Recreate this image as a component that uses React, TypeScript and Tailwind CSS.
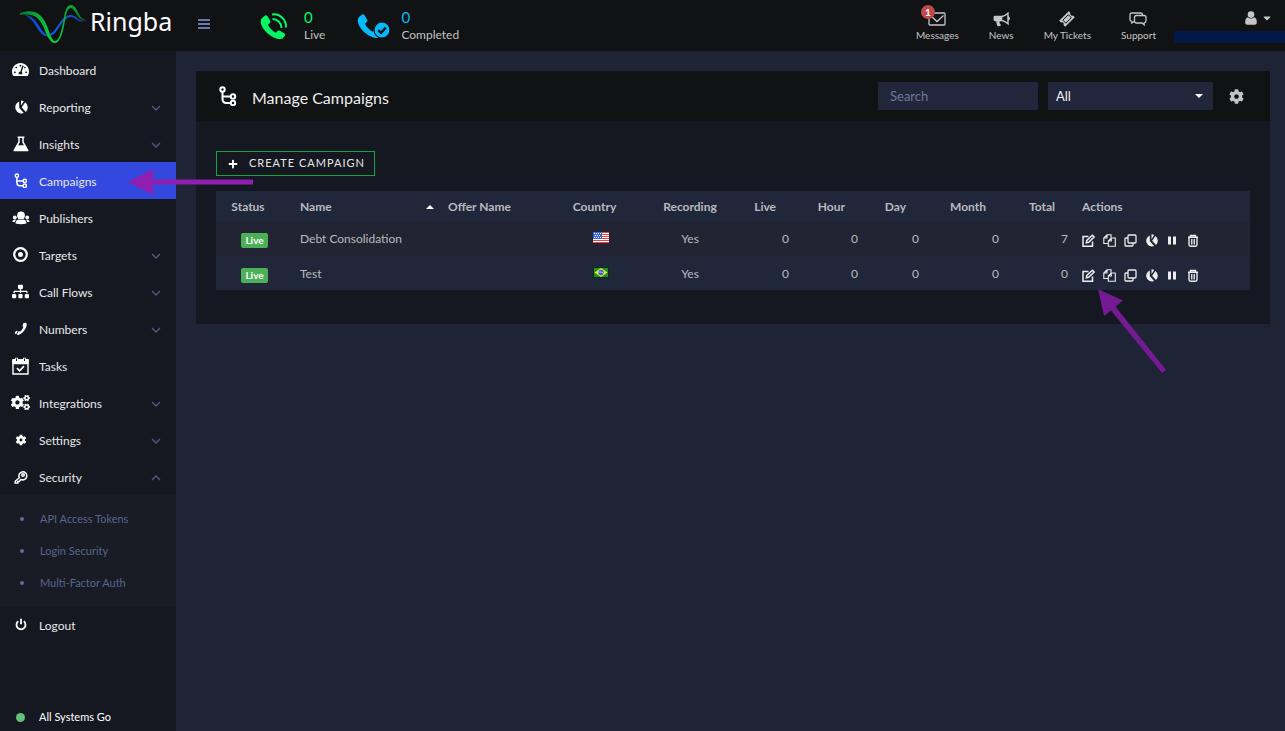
import React from "react";
import clsx from "clsx";
import { FaCaretDown, FaCog, FaCogs, FaPlus, FaSitemap, FaTachometerAlt } from "react-icons/fa";

type IconProps = { className?: string };

const TreeIcon: React.FC<IconProps> = ({ className }) => (
  <svg viewBox="0 0 18 20" className={className} fill="none" stroke="currentColor" strokeWidth="2">
    <circle cx="3.5" cy="3.5" r="2.2" />
    <circle cx="14" cy="10.5" r="2.2" />
    <circle cx="14" cy="17" r="2.2" />
    <path d="M3.5 5.7V13q0 4 4 4h4.3M3.5 10.5h8.3" />
  </svg>
);

const PieIcon: React.FC<IconProps> = ({ className }) => (
  <svg viewBox="0 0 14 14" className={className} fill="currentColor">
    <path d="M5.200 1.500v6.200l4.600 5.300A5.900 5.900 0 1 1 5.200 1.500z" />
    <path d="M7 .4A6 6 0 0 1 9.800 1.200L7 5.600z" />
    <path d="M11.200 2.200a6.300 6.300 0 0 1 .6 9.700L7.700 7.300z" />
  </svg>
);

const FlaskIcon: React.FC<IconProps> = ({ className }) => (
  <svg viewBox="0 0 16 16" className={className} fill="none" stroke="currentColor" strokeWidth="1.5">
    <path d="M4.600 1.200h6.800M6 1.500v4.700L1.500 14h13L10 6.200V1.500" />
    <path d="M4.300 10h7.400l2.400 4.500H1.900z" fill="currentColor" />
  </svg>
);

const UsersIcon: React.FC<IconProps> = ({ className }) => (
  <svg viewBox="0 0 18 14" className={className} fill="currentColor">
    <circle cx="9" cy="4.500" r="3.900" />
    <circle cx="2.800" cy="6.500" r="1.900" />
    <circle cx="15.200" cy="6.500" r="1.900" />
    <path d="M3.500 12.500q0-3.700 3.500-4 2 1.100 4 0 3.500.3 3.500 4-5.500 1.600-11 0zM.4 11q0-2 1.800-2.200h2Q3 9.800 2.800 11zM17.600 11q0-2-1.800-2.200h-2q1.200 1 1.400 2.200z" />
  </svg>
);

const TargetIcon: React.FC<IconProps> = ({ className }) => (
  <svg viewBox="0 0 16 16" className={className}>
    <circle cx="7.500" cy="7.500" r="6.300" fill="none" stroke="currentColor" strokeWidth="2.200" />
    <circle cx="7.500" cy="7.500" r="2.500" fill="currentColor" />
  </svg>
);

const HandsetIcon: React.FC<IconProps> = ({ className }) => (
  <svg viewBox="0 0 14 14" className={className} fill="currentColor">
    <path d="M9.300 1.300 11 .7q1-.3 1.600.8c1 3.200-3.600 10.400-8.300 11.500q-1 .1-1.500-.7l1.900-3.100 1.400.4c1.500-1 2.800-2.700 3.300-4.500l-.9-1z" />
    <path d="M.8 10.300 2.500 8.700l1.300.3-1.700 3.200-1-.4z" />
  </svg>
);

const CalendarIcon: React.FC<IconProps> = ({ className }) => (
  <svg viewBox="0 0 17 18" className={className} fill="none" stroke="currentColor" strokeWidth="1.400">
    <path d="M1 3h15v14H1z" />
    <path d="M1 3h15v3.500H1z" fill="currentColor" />
    <path d="M4.500.7v3M12.500.7v3" strokeWidth="2.800" />
    <path d="M4.500 1.500v2.500M12.500 1.500v2.500" stroke="#151821" strokeWidth="1" />
    <path d="m5 11.200 2.600 2.600 4.400-4.600" strokeWidth="1.700" />
  </svg>
);

const KeyIcon: React.FC<IconProps> = ({ className }) => (
  <svg viewBox="0 0 14 14" className={className} fill="none" stroke="currentColor" strokeWidth="1.500">
    <path d="M5.300 7.700 1.200 11.300v1.600h2.600v-1.500h1.400L7 9.400a4 4 0 1 0-1.700-1.700z" />
    <circle cx="9" cy="5" r="1.300" />
  </svg>
);

const PowerIcon: React.FC<IconProps> = ({ className }) => (
  <svg viewBox="0 0 12 13" className={className} fill="none" stroke="currentColor" strokeWidth="1.800">
    <path d="M3.200 3.300a4.500 4.500 0 1 0 5.600 0M6 .8v5.400" />
  </svg>
);

const SmallGearIcon: React.FC<IconProps> = ({ className }) => (
  <svg viewBox="0 0 14 14" className={className}>
    <path d="M7 .8v12.400M1.600 3.900l10.800 6.200M1.600 10.100l10.800-6.200" stroke="currentColor" strokeWidth="3" />
    <circle cx="7" cy="7" r="3.300" fill="none" stroke="currentColor" strokeWidth="3" />
    <circle cx="7" cy="7" r="1.700" fill="#151821" />
  </svg>
);

const Chevron: React.FC<{ up?: boolean }> = ({ up }) => (
  <svg
    viewBox="0 0 10 6"
    className="mt-[2px] h-[6px] w-[10px] text-[#515c85]"
    fill="none"
    stroke="currentColor"
    strokeWidth="1.300"
  >
    <path d={up ? "M1 5l4-4 4 4" : "M1 1l4 4 4-4"} />
  </svg>
);

const Logo = () => (
  <a href="#home" className="flex items-start" aria-label="Ringba">
    <svg viewBox="0 0 67 39" className="h-[39px] w-[67px] shrink-0" fill="none">
      <defs>
        <linearGradient id="green" x1="0" x2="1">
          <stop offset="0" stopColor="#0a7a24" />
          <stop offset=".5" stopColor="#07d345" />
          <stop offset="1" stopColor="#087d25" />
        </linearGradient>
        <linearGradient id="blue" x1="0" x2="1">
          <stop offset="0" stopColor="#0a3fc4" />
          <stop offset=".5" stopColor="#1160e8" />
          <stop offset="1" stopColor="#103e98" />
        </linearGradient>
      </defs>
      <path
        fill="url(#blue)"
        d="M6 10C15 11 19 22 24 28c3 3 6 2 10-2 6-8 9-16 17-16 6 0 8 8 15 5-7 5-10-3-15-3-7 0-10 9-16 16-6 5-11 4-15-1C15 21 12 12 4 10z"
      />
      <path
        fill="url(#green)"
        d="M0 8c15-5 22 1 27 13 3 8 5 15 8 15 4 0 6-9 8-18C45 7 46 0 51 0c7 0 7 15 15 15-8 2-11-12-15-12-5 0-5 9-7 18-2 10-5 17-9 17-5 0-8-7-11-15C19 12 14 8 0 10z"
      />
    </svg>
    <span className="ml-[3px] font-['Noto_Sans',sans-serif] text-[25px] leading-8 text-white">Ringba</span>
  </a>
);

const phonePath =
  "M2.500 4.500 6 1.500q1.400-.8 2.400.6l2.800 4.700q.7 1.300-.4 2.300L9 10.700c1.600 3.300 4.400 6.200 7.700 8l1.800-1.700q1.100-1 2.400-.3l4.600 2.700q1.300 1 .4 2.400l-2.400 2.800C16 27.500-2 14 2.500 4.500z";

const CallLiveIcon = () => (
  <svg viewBox="0 0 28 28" className="size-7 text-[#04f765]" fill="none" stroke="currentColor" strokeWidth="2">
    <path d={phonePath} fill="currentColor" stroke="none" transform="translate(-1 2)" />
    <path d="M12 2.500c7.500-1.500 14.500 5 14 13M12.500 7c5 0 8.800 3.600 9 9" />
  </svg>
);

const CallDoneIcon = () => (
  <svg viewBox="0 0 33 28" className="h-7 w-[33px] text-[#05b9fb]">
    <path d={phonePath} fill="currentColor" transform="translate(-1 1)" />
    <circle cx="25" cy="18" r="8" fill="currentColor" stroke="#111214" strokeWidth="1.200" />
    <path d="m21.300 18.200 2.700 2.600 4.800-5.200" fill="none" stroke="#111214" strokeWidth="2.400" />
  </svg>
);

const MailIcon: React.FC<IconProps> = ({ className }) => (
  <svg viewBox="0 0 18 14" className={className} fill="none" stroke="currentColor" strokeWidth="1.300">
    <rect x="1" y="1" width="16" height="12" rx="1" />
    <path d="m2.500 3.500 6.500 6 6.500-6" />
  </svg>
);

const HornIcon: React.FC<IconProps> = ({ className }) => (
  <svg viewBox="0 0 17 15" className={className} fill="none" stroke="currentColor" strokeWidth="1.400">
    <path d="M9 4.500Q12 4 15 1.200v10.600Q12 9 9 8.500" />
    <path d="M15.500 5.300q1.600 1.200 0 2.400z" fill="currentColor" />
    <path
      d="M2 3.800h7.300v5.400H6.800q-.8 1 0 2l1.300 2q-1.700 1.500-3.700.7-1-2.300-1.200-4.700H2Q.6 9.200.6 7.800V5.200Q.6 3.800 2 3.800z"
      fill="currentColor"
      stroke="none"
    />
  </svg>
);

const TicketIcon: React.FC<IconProps> = ({ className }) => (
  <svg viewBox="0 0 16 16" className={className}>
    <path
      d="M9.700.2 11.400 1.800a1.900 1.900 0 0 0 2.600 2.600l1.800 1.800-9.600 9.600-1.700-1.700a1.900 1.900 0 0 0-2.600-2.600L.2 9.700z"
      fill="currentColor"
    />
    <path d="m9.300 3.700 3 3-5.500 5.500-3-3z" fill="none" stroke="#111214" strokeWidth="1" />
  </svg>
);

const ChatIcon: React.FC<IconProps> = ({ className }) => (
  <svg viewBox="0 0 18 14" className={className} fill="none" stroke="currentColor" strokeWidth="1.300">
    <path d="M5 9.500 2.800 11V9.300Q1 9 1 7.500V3q0-2 2-2h8.500q2 0 2 2" />
    <path d="M7.500 3.500H15q2 0 2 2v3.300q0 1.800-1.800 2v2L13 11H7.500q-2 0-2-2V5.500q0-2 2-2z" />
  </svg>
);

const UserIcon: React.FC<IconProps> = ({ className }) => (
  <svg viewBox="0 0 12 14" className={className} fill="currentColor">
    <circle cx="6" cy="3.600" r="3.300" />
    <path d="M2.800 6.200Q6 9 9.200 6.200 12 7 11.800 12q-.2 1.700-2 1.700H2.200Q.4 13.700.2 12 0 7 2.800 6.200z" />
  </svg>
);

const EditIcon: React.FC<IconProps> = ({ className }) => (
  <svg viewBox="0 0 13 13" className={className} fill="none" stroke="currentColor" strokeWidth="1.500">
    <path d="M6.500 2.500H1v9.700h9.500V7.500" />
    <path d="m4.300 8.800.5-2.300 5.500-5.300 1.800 1.800-5.500 5.300z" />
  </svg>
);

const FilesIcon: React.FC<IconProps> = ({ className }) => (
  <svg viewBox="0 0 13 13" className={className} fill="none" stroke="currentColor" strokeWidth="1.100">
    <path d="M5 9.500H.8V4L4 .8h4v3M4 .8V4H.8" />
    <path d="M5.300 12.300V7l3-3h4v8.300zM8.300 4v3h-3" />
  </svg>
);

const CloneIcon: React.FC<IconProps> = ({ className }) => (
  <svg viewBox="0 0 13 13" className={className} fill="none" stroke="currentColor" strokeWidth="1.300">
    <rect x="4" y="1" width="8" height="8" rx="1" />
    <path d="M4 4H1.800q-.8 0-.8.8V11q0 1 .8 1H8q1 0 1-1V9" />
  </svg>
);

const PauseIcon: React.FC<IconProps> = ({ className }) => (
  <svg viewBox="0 0 13 13" className={className} fill="currentColor">
    <path d="M2 2.500h3v8H2zM7 2.500h3v8H7z" />
  </svg>
);

const TrashIcon: React.FC<IconProps> = ({ className }) => (
  <svg viewBox="0 0 13 13" className={className} fill="none" stroke="currentColor" strokeWidth="1.400">
    <path d="M1 3.200h10M3.500 3V1.500h5V3M2 3.500v7q0 1.700 1.500 1.700h5q1.500 0 1.500-1.700v-7" />
    <path d="M4.500 5v5.500M6 5v5.500M7.500 5v5.500" strokeWidth=".9" />
  </svg>
);

const FlagUS = () => (
  <svg viewBox="0 0 16 11" className="mx-auto mb-[3px] h-[11px] w-4" role="img" aria-label="United States">
    <path fill="#fff" d="M0 0h16v11H0z" />
    <path fill="#e0443c" d="M0 0h16v1H0zM0 2h16v1H0zM0 4h16v1H0zM0 6h16v1H0zM0 8h16v1H0zM0 10h16v1H0z" />
    <path fill="#3a66d8" d="M0 0h9v7H0z" />
    <path stroke="#fff" strokeDasharray="1 1" d="M1 1.500h7M2 3.500h6M1 5.500h7" />
  </svg>
);

const FlagBR = () => (
  <svg viewBox="0 0 16 11" className="mx-auto mb-[3px] h-[11px] w-4" role="img" aria-label="Brazil">
    <path fill="#07330c" d="M0 0h16v11H0z" />
    <path fill="#1f8f2d" d="M1 1h14v9H1z" />
    <path fill="#f5e52a" d="m8 1 6.500 4.500L8 10 1.500 5.500z" />
    <circle cx="8" cy="5.500" r="2.700" fill="#2f5fd0" />
    <path d="M5.500 5q3-.6 5 1.300" stroke="#dfe8fb" strokeWidth=".8" fill="none" />
  </svg>
);

type NavItem = {
  label: string;
  icon: React.FC<IconProps>;
  iconClass: string;
  arrow?: "down" | "up";
  active?: boolean;
};

const NAV: NavItem[] = [
  { label: "Dashboard", icon: FaTachometerAlt, iconClass: "size-[17px]" },
  { label: "Reporting", icon: PieIcon, iconClass: "size-[14px]", arrow: "down" },
  { label: "Insights", icon: FlaskIcon, iconClass: "size-4", arrow: "down" },
  { label: "Campaigns", icon: TreeIcon, iconClass: "h-[15px] w-[14px]", active: true },
  { label: "Publishers", icon: UsersIcon, iconClass: "h-[14px] w-[18px]" },
  { label: "Targets", icon: TargetIcon, iconClass: "size-4", arrow: "down" },
  { label: "Call Flows", icon: FaSitemap, iconClass: "size-[17px]", arrow: "down" },
  { label: "Numbers", icon: HandsetIcon, iconClass: "size-[14px]", arrow: "down" },
  { label: "Tasks", icon: CalendarIcon, iconClass: "h-[18px] w-[17px]" },
  { label: "Integrations", icon: FaCogs, iconClass: "size-[19px]", arrow: "down" },
  { label: "Settings", icon: SmallGearIcon, iconClass: "size-[12px]", arrow: "down" },
  { label: "Security", icon: KeyIcon, iconClass: "size-[14px]", arrow: "up" },
];

const SECURITY_LINKS = ["API Access Tokens", "Login Security", "Multi-Factor Auth"];

const TOP_LINKS = [
  { label: "Messages", icon: MailIcon, iconClass: "h-[14px] w-[18px]", badge: 1 },
  { label: "News", icon: HornIcon, iconClass: "h-[15px] w-[17px]" },
  { label: "My Tickets", icon: TicketIcon, iconClass: "size-4" },
  { label: "Support", icon: ChatIcon, iconClass: "h-[14px] w-[18px]" },
];

const ROWS = [
  { name: "Debt Consolidation", flag: FlagUS, total: 7 },
  { name: "Test", flag: FlagBR, total: 0 },
];

const ACTIONS = [
  { label: "Edit", icon: EditIcon },
  { label: "Copy", icon: FilesIcon },
  { label: "Clone", icon: CloneIcon },
  { label: "Report", icon: PieIcon },
  { label: "Pause", icon: PauseIcon },
  { label: "Delete", icon: TrashIcon },
];

const Stat: React.FC<{ label: string; value: number; className: string; children: React.ReactNode }> = ({
  label,
  value,
  className,
  children,
}) => (
  <div className={clsx("flex items-center", className)}>
    {children}
    <div className="flex flex-col">
      <span className="text-[15px] leading-[18px]">{value}</span>
      <span className="text-xs leading-[18px] text-[#c2c2c2]">{label}</span>
    </div>
  </div>
);

const TopBar = () => (
  <header className="flex h-[51px] items-center bg-[#111214]">
    <div className="flex w-[176px] shrink-0 items-center pb-[2px] pl-5">
      <Logo />
    </div>
    <button type="button" aria-label="Toggle menu" className="ml-[22px] flex w-3 flex-col gap-[2px] pb-[3px]">
      <span className="h-[2px] w-3 bg-[#6878a8]" />
      <span className="h-[2px] w-3 bg-[#6878a8]" />
      <span className="h-[2px] w-3 bg-[#6878a8]" />
    </button>
    <div className="ml-[50px] flex gap-8">
      <Stat label="Live" value={0} className="gap-4 text-[#04f765]">
        <CallLiveIcon />
      </Stat>
      <Stat label="Completed" value={0} className="gap-[11px] text-[#05b9fb]">
        <CallDoneIcon />
      </Stat>
    </div>
    <nav className="ml-auto flex h-full gap-[30px] text-[#c6c6c6]">
      {TOP_LINKS.map(({ label, icon: Icon, iconClass, badge }) => (
        <a key={label} href="#top" className="relative flex flex-col items-center pt-[11px] text-[10px]">
          <span className="flex h-4 items-center">
            <Icon className={iconClass} />
          </span>
          <span className="leading-4">{label}</span>
          {badge && (
            <span className="absolute top-[5px] left-[5px] flex size-[14px] items-center justify-center rounded-full bg-[#c04a4a] font-bold text-white">
              {badge}
            </span>
          )}
        </a>
      ))}
    </nav>
    <div className="ml-[18px] flex h-full w-[111px] flex-col items-end pt-[11px] text-[#c6c6c6]">
      <button type="button" aria-label="Account" className="flex items-center gap-[6px] pr-[14px]">
        <UserIcon className="h-[14px] w-3" />
        <FaCaretDown className="h-3 w-2" />
      </button>
      <div className="mt-[6px] h-3 w-full bg-[#021848]" />
    </div>
  </header>
);

const Sidebar = () => (
  <aside className="flex w-[176px] shrink-0 flex-col bg-[#151821] text-xs text-[#e8e8ea]">
    <nav>
      <ul>
        {NAV.map(({ label, icon: Icon, iconClass, arrow, active }) => (
          <li key={label} className="relative">
            <a href="#nav" className={clsx("flex h-[37px] items-center pr-[15px]", active && "bg-[#3348df]")}>
              <span className="ml-2 flex w-[25px] justify-center text-white">
                <Icon className={iconClass} />
              </span>
              <span className="ml-[6px] flex-1 pt-[2px]">{label}</span>
              {arrow && <Chevron up={arrow === "up"} />}
            </a>
            {active && (
              <svg
                viewBox="0 0 125 26"
                className="pointer-events-none absolute top-[7px] left-32 z-10 h-[26px] w-[125px]"
                fill="#8f1fb0"
              >
                <path d="M0 13 25 0v10.500h100v5H25V26z" />
              </svg>
            )}
          </li>
        ))}
      </ul>
      <ul className="bg-[#191c25] pt-2 pb-[7px] text-[11px] text-[#5a648c]">
        {SECURITY_LINKS.map((label) => (
          <li key={label}>
            <a href="#security" className="flex h-8 items-center pl-5">
              <span className="size-1 rounded-full bg-[#5f6c9c]" />
              <span className="ml-4">{label}</span>
            </a>
          </li>
        ))}
      </ul>
      <a href="#logout" className="flex h-[37px] items-center text-[#e8e8ea]">
        <span className="ml-2 flex w-[25px] justify-center text-white">
          <PowerIcon className="h-[13px] w-3" />
        </span>
        <span className="ml-[6px] pt-[2px]">Logout</span>
      </a>
    </nav>
    <div className="mt-auto flex h-7 items-center text-[11px] text-white">
      <span className="ml-4 size-[9px] rounded-full bg-[#63c17c]" />
      <span className="ml-[14px]">All Systems Go</span>
    </div>
  </aside>
);

const CampaignTable = () => (
  <table className="mt-[15px] w-full table-fixed text-xs text-[#b9babd]">
    <colgroup>
      <col className="w-[77px]" />
      <col className="w-[148px]" />
      <col className="w-[124px]" />
      <col className="w-[72px]" />
      <col className="w-[106px]" />
      <col className="w-[53px]" />
      <col className="w-[69px]" />
      <col className="w-[61px]" />
      <col className="w-[80px]" />
      <col className="w-[69px]" />
      <col className="w-[175px]" />
    </colgroup>
    <thead>
      <tr className="h-[31px] bg-[#21273b] text-left">
        <th className="pr-5 pl-[7px] text-center">Status</th>
        <th className="px-[7px]">
          <span className="flex items-center justify-between">
            Name
            <svg viewBox="0 0 8 4" className="h-1 w-2 fill-white">
              <path d="M0 4 4 0l4 4z" />
            </svg>
          </span>
        </th>
        <th className="px-[7px]">Offer Name</th>
        <th className="pr-5 pl-[7px] text-center">Country</th>
        <th className="px-[7px] text-center">Recording</th>
        <th className="pr-5 text-right">Live</th>
        <th className="pr-5 text-right">Hour</th>
        <th className="pr-5 text-right">Day</th>
        <th className="pr-5 text-right">Month</th>
        <th className="pr-5 text-right">Total</th>
        <th className="px-[7px]">Actions</th>
      </tr>
    </thead>
    <tbody>
      {ROWS.map(({ name, flag: Flag, total }, i) => (
        <tr
          key={name}
          className="odd:h-[35px] odd:bg-[#222433] even:h-[33px] even:bg-[#21273b] odd:[&>td]:pb-px"
        >
          <td className="px-[7px]">
            <span className="mx-auto mt-[3px] block h-[15px] w-[27px] rounded-[2px] bg-[#4bb058] text-center text-[10px] leading-[15px] font-bold text-white">
              Live
            </span>
          </td>
          <td className="px-[7px]">{name}</td>
          <td />
          <td>
            <Flag />
          </td>
          <td className="text-center">Yes</td>
          <td className="pr-[7px] text-right">0</td>
          <td className="pr-[7px] text-right">0</td>
          <td className="pr-[7px] text-right">0</td>
          <td className="pr-[7px] text-right">0</td>
          <td className="pr-[7px] text-right">{total}</td>
          <td className="relative px-[7px]">
            <span className="flex gap-2 pt-[3px] text-[#ededf0]">
              {ACTIONS.map(({ label, icon: Icon }) => (
                <button key={label} type="button" aria-label={label}>
                  <Icon className="size-[13px]" />
                </button>
              ))}
            </span>
            {i === ROWS.length - 1 && (
              <svg
                viewBox="0 0 70 84"
                className="pointer-events-none absolute top-8 left-[23px] z-10 h-[84px] w-[70px]"
                fill="#741a92"
              >
                <path d="M0 0l25 11.500-7.500 6L68 81l-4 3-51-62.500L6 27z" />
              </svg>
            )}
          </td>
        </tr>
      ))}
    </tbody>
  </table>
);

export default function App() {
  return (
    <div className="flex min-h-screen flex-col overflow-x-hidden bg-[#1f2336] font-['Lato',sans-serif]">
      <TopBar />
      <div className="flex flex-1">
        <Sidebar />
        <main className="min-w-0 flex-1 pt-5 pr-[15px] pl-5">
          <section className="bg-[#151820]">
            <div className="flex h-[50px] items-center bg-[#111214] pr-[26px] pl-[23px]">
              <TreeIcon className="h-[20px] w-[18px] text-white" />
              <h1 className="ml-[15px] pt-1 text-base text-[#eeeeee]">Manage Campaigns</h1>
              <input
                type="text"
                aria-label="Search"
                placeholder="Search"
                className="ml-auto h-7 w-40 bg-[#22263a] px-3 text-[13px] text-white placeholder:text-[#6f7699]"
              />
              <div className="relative ml-[10px]">
                <select
                  aria-label="Status filter"
                  className="block h-7 w-[165px] appearance-none bg-[#22263a] px-2 pt-px text-[13px] text-[#f0f0f0]"
                >
                  <option>All</option>
                </select>
                <svg
                  viewBox="0 0 8 4"
                  className="pointer-events-none absolute top-3 right-[10px] h-1 w-2 fill-white"
                >
                  <path d="M0 0h8L4 4z" />
                </svg>
              </div>
              <button type="button" aria-label="Table settings" className="ml-4 text-[#c4c4c4]">
                <FaCog className="size-[15px]" />
              </button>
            </div>
            <div className="px-5 pt-[30px] pb-[34px]">
              <button
                type="button"
                className="flex h-[25px] items-center border border-[#12a344] pr-[9px] pl-[11px] text-[11px] tracking-[1px] text-[#e6e6e6]"
              >
                <FaPlus className="mr-[11px] size-[10px] text-white" />
                CREATE CAMPAIGN
              </button>
              <CampaignTable />
            </div>
          </section>
        </main>
      </div>
    </div>
  );
}
